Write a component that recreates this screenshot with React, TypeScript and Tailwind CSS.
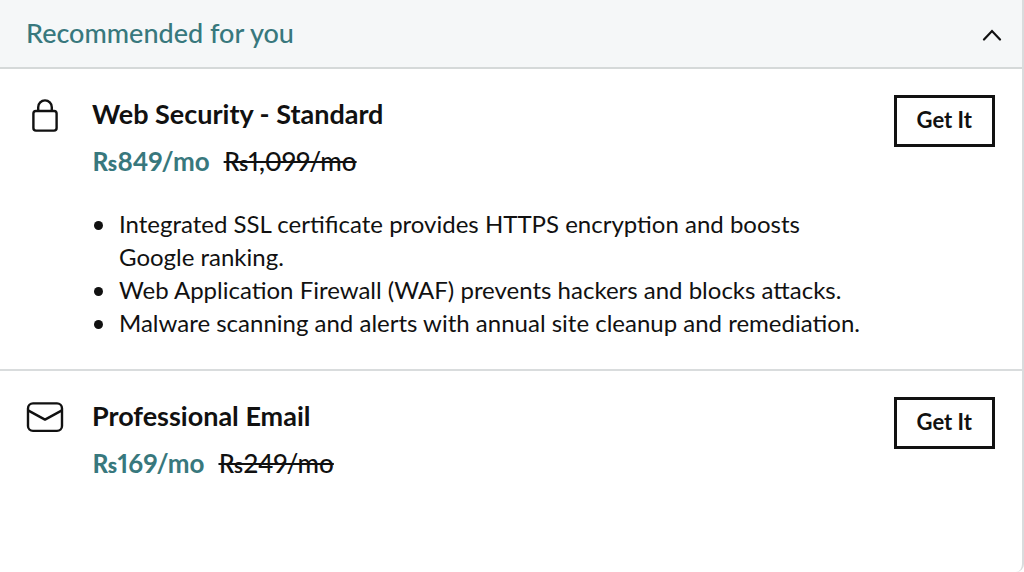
import { useState } from "react";
import type { ReactNode } from "react";

type Product = {
  name: string;
  price: string;
  oldPrice: string;
  icon: ReactNode;
  features: string[];
};

function LockIcon() {
  return (
    <svg width="38" height="40" viewBox="0 0 38 40" fill="none" stroke="currentColor" strokeWidth="2.4" aria-hidden="true">
      <rect x="7.400" y="15" width="23.200" height="19.600" rx="2.600" />
      <path d="M12.200 15V11.200a6.800 6.800 0 0 1 13.600 0V15" />
    </svg>
  );
}

function MailIcon() {
  return (
    <svg width="38" height="40" viewBox="0 0 38 40" fill="none" stroke="currentColor" strokeWidth="2.4" aria-hidden="true">
      <rect x="2" y="5.400" width="34" height="27.500" rx="5" />
      <path d="M2.500 12.600 19 21.600l16.500-9" strokeLinejoin="round" />
    </svg>
  );
}

const products: Product[] = [
  {
    name: "Web Security - Standard",
    price: "₨849/mo",
    oldPrice: "₨1,099/mo",
    icon: <LockIcon />,
    features: [
      "Integrated SSL certificate provides HTTPS encryption and boosts Google ranking.",
      "Web Application Firewall (WAF) prevents hackers and blocks attacks.",
      "Malware scanning and alerts with annual site cleanup and remediation.",
    ],
  },
  {
    name: "Professional Email",
    price: "₨169/mo",
    oldPrice: "₨249/mo",
    icon: <MailIcon />,
    features: [],
  },
];

function ProductRow({ product }: { product: Product }) {
  return (
    <li className="flex items-start border-b-2 border-[#d9dcdd] pt-[26px] pr-[27px] pb-[30px] pl-[26px] last:border-b-0">
      <div className="mt-px shrink-0">{product.icon}</div>

      <div className="ml-7 min-w-0 flex-1">
        <h3 className="text-[27px] leading-[38px] font-bold">{product.name}</h3>
        <p className="mt-1 flex gap-[14px] text-[26px] leading-[48px] proportional-nums">
          <span className="font-bold text-[#38787d]">{product.price}</span>
          <del className="font-medium">{product.oldPrice}</del>
        </p>

        {product.features.length > 0 && (
          <ul className="mt-[22px] max-w-[782px] text-[24px] leading-[33px]">
            {product.features.map((feature) => (
              <li key={feature} className="flex">
                <span className="mt-[14px] mr-4 ml-[2px] size-[9px] shrink-0 rounded-full bg-[#111]" />
                <span>{feature}</span>
              </li>
            ))}
          </ul>
        )}
      </div>

      <button
        type="button"
        className="h-[52px] shrink-0 border-3 border-[#111] px-5 pb-[2px] text-[22px] leading-6 font-bold"
      >
        Get It
      </button>
    </li>
  );
}

export default function App() {
  const [open, setOpen] = useState(true);

  return (
    <section className="min-h-screen rounded-br-lg border-r-2 border-[#d9dcdd] bg-white font-['Lato',sans-serif] text-[#111]">
      <h2 className="border-b-2 border-[#d5d9d9] bg-[#f5f7f8]">
        <button
          type="button"
          aria-expanded={open}
          onClick={() => setOpen(!open)}
          className="flex h-[67px] w-full items-center justify-between pr-5 pl-[26px] text-[27px] font-medium text-[#38787d]"
        >
          Recommended for you
          <svg width="20" height="14" viewBox="0 0 20 14" fill="none" stroke="#111" strokeWidth="2.2" strokeLinecap="round" aria-hidden="true">
            <path d={open ? "M2 12.500 10 4l8 8.500" : "M2 4l8 8.500L18 4"} />
          </svg>
        </button>
      </h2>

      {open && (
        <ul>
          {products.map((product) => (
            <ProductRow key={product.name} product={product} />
          ))}
        </ul>
      )}
    </section>
  );
}
